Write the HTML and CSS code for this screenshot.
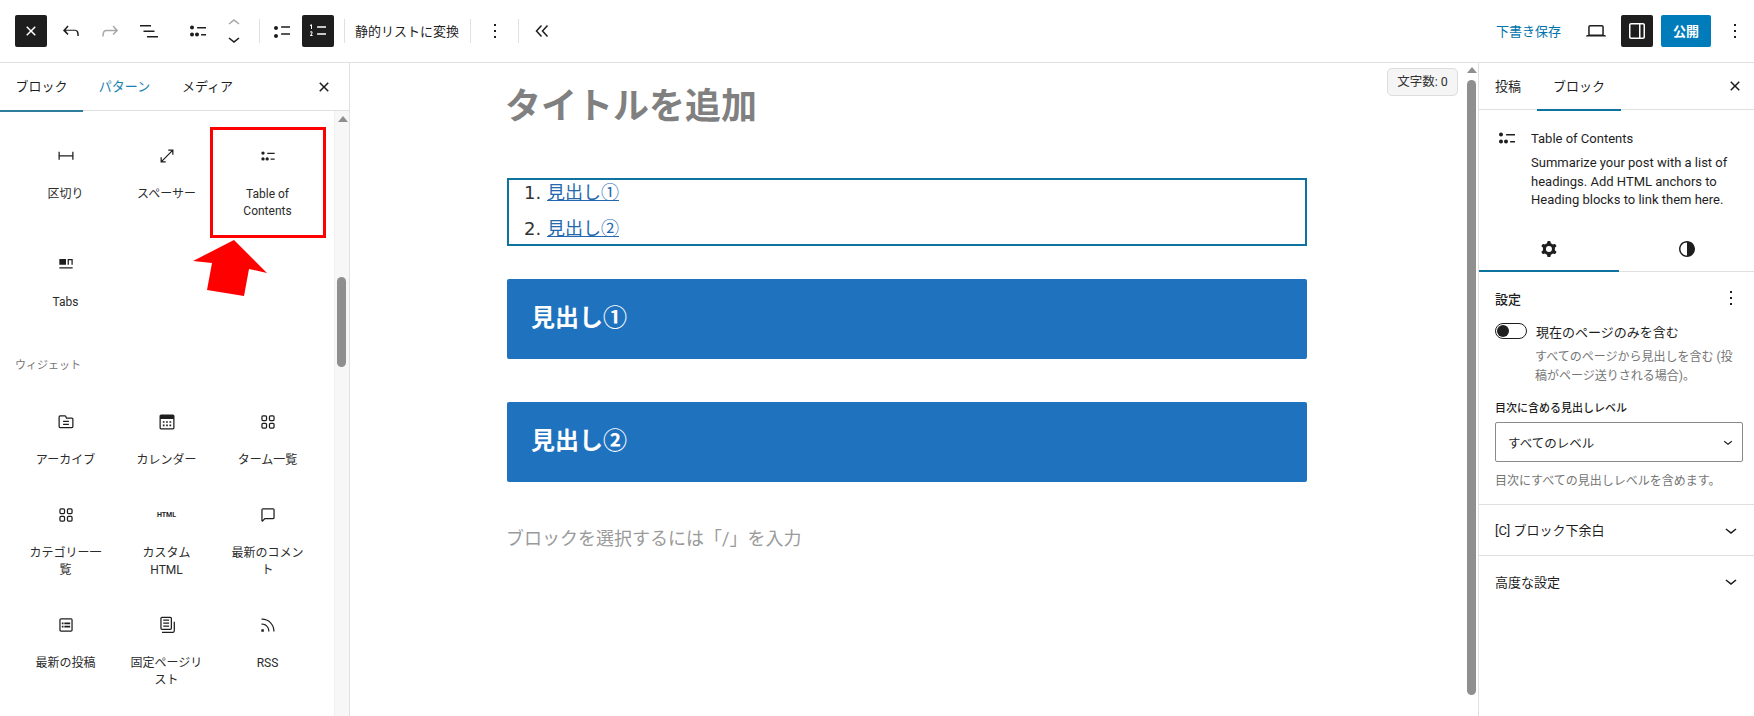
FILE: index.html
```html
<!DOCTYPE html>
<html lang="ja">
<head>
<meta charset="utf-8">
<title>Editor</title>
<link rel="stylesheet" href="styles.css">
</head>
<body>
<svg class="defs" width="0" height="0" aria-hidden="true">
  <symbol id="i-close" viewBox="0 0 24 24"><path d="M12 13.06l3.712 3.713 1.061-1.06L13.061 12l3.712-3.712-1.06-1.06L12 10.938 8.288 7.227l-1.061 1.06L10.939 12l-3.712 3.712 1.06 1.061L12 13.061z"/></symbol>
  <symbol id="i-more" viewBox="0 0 24 24"><path d="M13 19h-2v-2h2v2zm0-6h-2v-2h2v2zm0-6h-2V5h2v2z"/></symbol>
  <symbol id="i-toc" viewBox="0 0 24 24"><path d="M20 9.484h-8.889v-1.5H20v1.5Zm0 7h-4.889v-1.5H20v1.5Zm-14 .032a1 1 0 1 0 0-2 1 1 0 0 0 0 2Zm0 1a2 2 0 1 0 0-4 2 2 0 0 0 0 4Z"/><path d="M13 15.516a2 2 0 1 1-4 0 2 2 0 0 1 4 0ZM8 8.484a2 2 0 1 1-4 0 2 2 0 0 1 4 0Z"/></symbol>
  <symbol id="i-down" viewBox="0 0 24 24"><path d="M17.5 11.6L12 16l-5.5-4.4.9-1.2L12 14l4.5-3.6 1 1.2z"/></symbol>
  <symbol id="i-cat" viewBox="0 0 24 24"><path fill-rule="evenodd" d="M6 5.5h3a.5.5 0 0 1 .5.5v3a.5.5 0 0 1-.5.5H6a.5.5 0 0 1-.5-.5V6a.5.5 0 0 1 .5-.5ZM4 6a2 2 0 0 1 2-2h3a2 2 0 0 1 2 2v3a2 2 0 0 1-2 2H6a2 2 0 0 1-2-2V6Zm11-.5h3a.5.5 0 0 1 .5.5v3a.5.5 0 0 1-.5.5h-3a.5.5 0 0 1-.5-.5V6a.5.5 0 0 1 .5-.5ZM13 6a2 2 0 0 1 2-2h3a2 2 0 0 1 2 2v3a2 2 0 0 1-2 2h-3a2 2 0 0 1-2-2V6Zm5 8.5h-3a.5.5 0 0 0-.5.5v3a.5.5 0 0 0 .5.5h3a.5.5 0 0 0 .5-.5v-3a.5.5 0 0 0-.5-.5ZM15 13a2 2 0 0 0-2 2v3a2 2 0 0 0 2 2h3a2 2 0 0 0 2-2v-3a2 2 0 0 0-2-2h-3Zm-9 1.5h3a.5.5 0 0 1 .5.5v3a.5.5 0 0 1-.5.5H6a.5.5 0 0 1-.5-.5v-3a.5.5 0 0 1 .5-.5ZM4 15a2 2 0 0 1 2-2h3a2 2 0 0 1 2 2v3a2 2 0 0 1-2 2H6a2 2 0 0 1-2-2v-3Z"/></symbol>
</svg>

<div class="app">
  <header class="topbar">
    <div class="tools">
      <button class="tool tool-dark"><svg class="ic ic-x"><use href="#i-close"/></svg></button>
      <button class="tool tool-undo"><svg class="ic" viewBox="0 0 24 24"><path d="M18.3 11.7c-.6-.6-1.4-.9-2.3-.9H6.7l2.9-3.3-1.1-1-4.5 5L8.5 16l1-1-2.7-3.2H16c.5 0 .9.2 1.3.5 1 1 1 3.4 1 4.5v.3h1.5v-.2c0-1.5 0-4.3-1.5-5.7z"/></svg></button>
      <button class="tool"><svg class="ic ic-off" viewBox="0 0 24 24"><path d="M15.6 6.5l-1.1 1 2.9 3.3H8c-.9 0-1.7.3-2.3.9-1.4 1.5-1.4 4.2-1.4 5.6v.2h1.5v-.3c0-1.1 0-3.5 1-4.5.3-.3.7-.5 1.3-.5h9.2L14.5 15l1.1 1.1 4.6-4.6-4.6-5z"/></svg></button>
      <button class="tool"><svg class="ic" viewBox="0 0 24 24"><path d="M3 6h11v1.5H3V6zm3.5 5.5h11V13h-11v-1.500zM21 17H10v1.5h11V17z"/></svg></button>
      <button class="tool tool-toc"><svg class="ic"><use href="#i-toc"/></svg></button>
      <div class="tool mover">
        <svg class="ic ic-off" viewBox="0 0 24 24"><path d="M6.5 12.4L12 8l5.5 4.4-.9 1.2L12 10l-4.500 3.6-1-1.2z"/></svg>
        <svg class="ic"><use href="#i-down"/></svg>
      </div>
      <span class="sep sep-a"></span>
      <button class="tool"><svg class="ic" viewBox="0 0 24 24"><path d="M11.1 15.8H20v-1.5h-8.9v1.5zm0-8.6v1.5H20V7.2h-8.9zM6 11c1.1 0 2-.9 2-2s-.9-2-2-2-2 .9-2 2 .9 2 2 2zm0 8c1.1 0 2-.9 2-2s-.9-2-2-2-2 .9-2 2 .9 2 2 2z"/></svg></button>
      <button class="tool tool-dark tool-num"><svg class="ic ic-w" viewBox="0 0 24 24"><path d="M11.1 15.8H20v-1.5h-8.9v1.5zm0-8.6v1.5H20V7.2h-8.9zM5 6.7V10h1V5.3L3.8 6l.4 1 .8-.3zm-.4 5.7c-.3.1-.5.2-.7.3l.1 1.1c.2-.2.5-.4.8-.5.3-.1.6 0 .7.1.2.3 0 .8-.2 1.1-.5.8-.9 1.6-1.4 2.5h2.7v-1h-1c.3-.6.8-1.4.9-2.1.1-.3 0-.8-.2-1.1-.5-.6-1.3-.5-1.7-.4z"/></svg></button>
      <span class="sep sep-b"></span>
      <span class="tool-text">静的リストに変換</span>
      <span class="sep sep-c"></span>
      <button class="tool"><svg class="ic"><use href="#i-more"/></svg></button>
      <span class="sep sep-d"></span>
      <button class="tool"><svg class="ic" viewBox="0 0 24 24"><path class="ln" d="M11.500 6.500 6.500 12l5 5.500M17.500 6.500l-5 5.500 5 5.500"/></svg></button>
    </div>
    <div class="actions">
      <span class="save">下書き保存</span>
      <button class="tool tool-view"><svg class="ic" viewBox="0 0 24 24"><path d="M20.5 16h-.7V8c0-1.1-.9-2-2-2H6.200c-1.100 0-2 .9-2 2v8h-.7c-.8 0-1.500.7-1.500 1.500h20c0-.8-.7-1.500-1.500-1.500zM5.700 8c0-.3.2-.5.5-.5h11.600c.3 0 .5.2.5.5v7.600H5.700V8z"/></svg></button>
      <button class="tool tool-dark"><svg class="ic ic-w" viewBox="0 0 24 24"><path d="M18 4H6c-1.100 0-2 .9-2 2v12c0 1.100.9 2 2 2h12c1.100 0 2-.9 2-2V6c0-1.100-.9-2-2-2zm-4 14.500H6c-.3 0-.5-.2-.5-.5V6c0-.3.2-.5.5-.5h8v13zm4.500-.5c0 .3-.2.5-.5.5h-2.500v-13H18c.3 0 .5.2.5.5v12z"/></svg></button>
      <button class="publish">公開</button>
      <button class="tool tool-more2"><svg class="ic"><use href="#i-more"/></svg></button>
    </div>
  </header>

  <main class="main">
    <aside class="inserter">
      <div class="ins-tabs">
        <span class="tab tab-on">ブロック</span>
        <span class="tab tab-blue">パターン</span>
        <span class="tab">メディア</span>
        <svg class="ic ins-close"><use href="#i-close"/></svg>
      </div>
      <div class="ins-body">
        <div class="ins-list">
          <div class="grid grid-first">
            <div class="item"><svg class="ic" viewBox="0 0 24 24"><path d="M4.500 12.500v4H3V7h1.500v3.987h15V7H21v9.500h-1.500v-4h-15Z"/></svg><span class="label">区切り</span></div>
            <div class="item"><svg class="ic" viewBox="0 0 24 24"><path class="ln" d="M13.500 5h5.500v5.500M19 5 5 19M5 13.500V19h5.500"/></svg><span class="label">スペーサー</span></div>
            <div class="item"><svg class="ic"><use href="#i-toc"/></svg><span class="label">Table of Contents</span></div>
            <div class="item"><svg class="ic" viewBox="0 0 24 24"><path d="M4 6h8v7H4zM4 16h16v1.500H4z"/><path class="ln" d="M14.700 13V6.700h4.600V13"/></svg><span class="label">Tabs</span></div>
          </div>
          <h3 class="group-title">ウィジェット</h3>
          <div class="grid">
            <div class="item"><svg class="ic" viewBox="0 0 24 24"><path fill-rule="evenodd" d="M13 6.500h6a2 2 0 0 1 2 2v9a2 2 0 0 1-2 2H5a2 2 0 0 1-2-2V6a2 2 0 0 1 2-2h5.800a2 2 0 0 1 1.700 1l.5 1.500ZM12 8 11.200 6a.5.5 0 0 0-.4-.5H5a.5.5 0 0 0-.5.5v11.500a.5.5 0 0 0 .5.5h14a.5.5 0 0 0 .5-.5v-9A.5.5 0 0 0 19 8h-7Z"/><path d="M8.500 10.500H15.500V12H8.500zM8.500 14H15.500V15.500H8.500z"/></svg><span class="label">アーカイブ</span></div>
            <div class="item"><svg class="ic" viewBox="0 0 24 24"><path d="M19 3H5c-1.105 0-2 .895-2 2v14c0 1.105.895 2 2 2h14c1.105 0 2-.895 2-2V5c0-1.105-.895-2-2-2zM4.500 8.500h15V19c0 .276-.224.5-.5.5H5c-.276 0-.5-.224-.5-.5V8.500zM7 11h2v2H7zm4 0h2v2h-2zm4 0h2v2h-2zM7 15h2v2H7zm4 0h2v2h-2zm4 0h2v2h-2z"/></svg><span class="label">カレンダー</span></div>
            <div class="item"><svg class="ic"><use href="#i-cat"/></svg><span class="label">ターム一覧</span></div>
            <div class="item"><svg class="ic"><use href="#i-cat"/></svg><span class="label">カテゴリー一覧</span></div>
            <div class="item"><span class="ic-html">HTML</span><span class="label">カスタム HTML</span></div>
            <div class="item"><svg class="ic" viewBox="0 0 24 24"><path d="M18 4H6c-1.100 0-2 .9-2 2v12.900c0 .6.5 1.100 1.100 1.100.3 0 .5-.1.8-.3L8.500 17H18c1.100 0 2-.9 2-2V6c0-1.100-.9-2-2-2zm.5 11c0 .3-.2.5-.5.5H7.900l-2.400 2.400V6c0-.3.2-.5.5-.5h12c.3 0 .5.2.5.5v9z"/></svg><span class="label">最新のコメント</span></div>
            <div class="item"><svg class="ic" viewBox="0 0 24 24"><path d="M18 4H6c-1.100 0-2 .9-2 2v12c0 1.100.9 2 2 2h12c1.100 0 2-.9 2-2V6c0-1.100-.9-2-2-2zm.5 14c0 .3-.2.5-.5.5H6c-.3 0-.5-.2-.5-.5V6c0-.3.2-.5.5-.5h12c.3 0 .5.2.5.5v12zM7 11h2V9H7v2zm0 4h2v-2H7v2zm3-4h7V9h-7v2zm0 4h7v-2h-7v2z"/></svg><span class="label">最新の投稿</span></div>
            <div class="item"><svg class="ic" viewBox="0 0 24 24"><path d="M14.500 5.500h-7V7h7V5.500ZM7.500 9h7v1.500h-7V9Zm7 3.500h-7V14h7v-1.500Z"/><path d="M16 2H6a2 2 0 0 0-2 2v12a2 2 0 0 0 2 2h10a2 2 0 0 0 2-2V4a2 2 0 0 0-2-2ZM6 3.500h10a.5.5 0 0 1 .5.5v12a.5.5 0 0 1-.5.5H6a.5.5 0 0 1-.5-.5V4a.5.5 0 0 1 .5-.5Z"/><path d="M20 8v11c0 .69-.31 1-.999 1H6v1.500h13.001c1.520 0 2.499-.982 2.499-2.500V8H20Z"/></svg><span class="label">固定ページリスト</span></div>
            <div class="item"><svg class="ic" viewBox="0 0 24 24"><path d="M5 10.200h-.8v1.500H5c1.900 0 3.800.8 5.100 2.100 1.400 1.400 2.100 3.200 2.100 5.100v.8h1.500V19c0-2.300-.9-4.500-2.600-6.200-1.600-1.600-3.800-2.600-6.100-2.600zm10.400-1.600C12.600 5.800 8.900 4.200 5 4.200h-.8v1.500H5c3.500 0 6.900 1.400 9.400 3.900s3.900 5.800 3.900 9.400v.8h1.500V19c0-3.900-1.600-7.600-4.400-10.400zM4 20h3v-3H4v3z"/></svg><span class="label">RSS</span></div>
          </div>
        </div>
        <div class="sbar sbar-left"><i class="sbar-up"></i><i class="sbar-thumb"></i></div>
        <div class="redbox"></div>
        <svg class="redarrow" viewBox="0 0 80 60"><polygon points="41,0 0,21 19,23 14,50 51,56 56,29 74,33"/></svg>
      </div>
    </aside>

    <section class="canvas">
      <div class="canvas-inner">
        <div class="doc">
          <h1 class="title">タイトルを追加</h1>
          <div class="toc">
            <ol class="toc-list">
              <li><a class="toc-link">見出し①</a></li>
              <li><a class="toc-link">見出し②</a></li>
            </ol>
          </div>
          <h2 class="heading">見出し①</h2>
          <h2 class="heading heading-2">見出し②</h2>
          <p class="placeholder">ブロックを選択するには「/」を入力</p>
        </div>
      </div>
      <div class="sbar sbar-right"><i class="sbar-up"></i><i class="sbar-thumb"></i></div>
      <div class="count">文字数: 0</div>
    </section>

    <aside class="inspector">
      <div class="insp-tabs">
        <span class="itab">投稿</span>
        <span class="itab itab-on">ブロック</span>
        <svg class="ic insp-close"><use href="#i-close"/></svg>
      </div>
      <div class="card">
        <svg class="ic card-ic"><use href="#i-toc"/></svg>
        <div class="card-text">
          <div class="card-title">Table of Contents</div>
          <p class="card-desc">Summarize your post with a list of headings. Add HTML anchors to Heading blocks to link them here.</p>
        </div>
      </div>
      <div class="stabs">
        <span class="stab stab-on"><svg class="ic" viewBox="0 0 24 24"><path fill-rule="evenodd" d="M10.289 4.836A1 1 0 0 1 11.275 4h1.306a1 1 0 0 1 .987.836l.244 1.466c.787.26 1.503.679 2.108 1.218l1.393-.522a1 1 0 0 1 1.216.437l.653 1.13a1 1 0 0 1-.23 1.273l-1.148.944a6.025 6.025 0 0 1 0 2.435l1.149.946a1 1 0 0 1 .23 1.272l-.653 1.13a1 1 0 0 1-1.216.437l-1.394-.522c-.605.54-1.32.958-2.108 1.218l-.244 1.466a1 1 0 0 1-.987.836h-1.306a1 1 0 0 1-.986-.836l-.244-1.466a5.995 5.995 0 0 1-2.108-1.218l-1.394.522a1 1 0 0 1-1.217-.436l-.653-1.131a1 1 0 0 1 .23-1.272l1.149-.946a6.026 6.026 0 0 1 0-2.435l-1.148-.944a1 1 0 0 1-.23-1.272l.653-1.131a1 1 0 0 1 1.217-.437l1.393.522a5.994 5.994 0 0 1 2.108-1.218l.244-1.466ZM14.929 12a3 3 0 1 1-6 0 3 3 0 0 1 6 0Z"/></svg></span>
        <span class="stab"><svg class="ic" viewBox="0 0 24 24"><path d="M12 4c-4.400 0-8 3.600-8 8s3.600 8 8 8 8-3.600 8-8-3.600-8-8-8zm0 14.500c-3.600 0-6.500-2.900-6.500-6.500S8.400 5.500 12 5.500v13z"/></svg></span>
      </div>
      <div class="settings">
        <div class="set-head"><span class="set-title">設定</span><svg class="ic"><use href="#i-more"/></svg></div>
        <div class="toggle-row"><span class="toggle"><i class="knob"></i></span><span class="toggle-label">現在のページのみを含む</span></div>
        <p class="help help-toggle">すべてのページから見出しを含む (投稿がページ送りされる場合)。</p>
        <div class="field-label">目次に含める見出しレベル</div>
        <div class="select"><span>すべてのレベル</span><svg class="ic sel-ic"><use href="#i-down"/></svg></div>
        <p class="help help-select">目次にすべての見出しレベルを含めます。</p>
      </div>
      <div class="acc"><span>[C] ブロック下余白</span><svg class="ic"><use href="#i-down"/></svg></div>
      <div class="acc"><span>高度な設定</span><svg class="ic"><use href="#i-down"/></svg></div>
    </aside>
  </main>
</div>
</body>
</html>
```
FILE: styles.css
```css
* { box-sizing: border-box; }
html, body { margin: 0; height: 100%; overflow: hidden; background: #fff; }
body { font-family: Roboto, "Noto Sans CJK JP", sans-serif; font-size: 13px; color: #1e1e1e; }
h1, h2, h3, p { margin: 0; }
button { border: 0; background: none; padding: 0; font: inherit; color: inherit; }
.defs { position: absolute; }

.app { display: flex; flex-direction: column; width: 1754px; height: 716px; }
.ic { display: block; width: 24px; height: 24px; fill: #1e1e1e; flex: none; }
.ic-w, .ic-x { fill: #fff; }
.ic-off { fill: #a8a8a8; }
.ln { fill: none; stroke: #1e1e1e; stroke-width: 1.5; }

/* top bar */
.topbar { display: flex; justify-content: space-between; align-items: center; height: 63px; padding: 0 3px 1px 15px; border-bottom: 1px solid #e0e0e0; flex: none; }
.tools, .actions { display: flex; align-items: center; }
.tool { display: flex; align-items: center; justify-content: center; width: 32px; height: 32px; border-radius: 2px; flex: none; }
.tools .tool + .tool { margin-left: 7px; }
.tool-dark { background: #1e1e1e; }
.tools .tool + .tool.tool-undo { margin-left: 8px; }
.tools .tool + .tool.tool-toc { margin-left: 17px; }
.tools .tool + .tool.mover { margin-left: 4px; flex-direction: column; }
.mover .ic + .ic { margin-top: -8px; }
.tools .tool + .tool.tool-num { margin-left: 4px; }
.sep { width: 1px; height: 24px; background: #e0e0e0; flex: none; }
.sep-a { margin: 0 6px 0 9px; }
.sep-b { margin: 0 10px; }
.sep-c { margin: 0 8px 0 12px; }
.sep-d { margin: 0 7px; }
.tool-text { width: 103px; font-size: 13px; white-space: nowrap; }
.save { color: #0073aa; width: 64px; white-space: nowrap; }
.actions .tool-view { margin-left: 20px; }
.actions .tool-dark { margin-left: 9px; }
.publish { width: 50px; height: 32px; margin-left: 8px; background: #007cba; color: #fff; border-radius: 2px; font-weight: 700; font-size: 13px; }
.tool-more2 { margin-left: 8px; }

/* main */
.main { display: flex; flex: 1; min-height: 0; }

/* inserter */
.inserter { display: flex; flex-direction: column; width: 350px; border-right: 1px solid #e0e0e0; flex: none; }
.ins-tabs { display: flex; align-items: center; height: 48px; border-bottom: 1px solid #e0e0e0; position: relative; flex: none; }
.tab { width: 83px; height: 48px; line-height: 48px; text-align: center; position: relative; font-size: 13px; }
.tab-on::after { content: ""; position: absolute; left: 0; right: 0; bottom: -1px; height: 2px; background: #2f7d9c; }
.tab-blue { color: #1c83b0; }
.ins-close { margin-left: auto; margin-right: 13px; }
.ins-body { flex: 1; display: flex; position: relative; min-height: 0; }
.ins-list { flex: 1; overflow: hidden; padding: 33px 0 0 15px; }
.grid { display: grid; grid-template-columns: repeat(3, 101px); row-gap: 34px; align-items: start; }
.grid-first { row-gap: 32px; }
.item { display: flex; flex-direction: column; align-items: center; padding: 0 12px; }
.item .ic { width: 20px; height: 20px; margin: 2px 0; }
.label { margin-top: 18px; font-size: 12px; line-height: 17px; text-align: center; color: #2b2b2b; }
.ic-html { display: block; height: 24px; font-size: 7px; font-weight: 700; line-height: 24px; text-align: center; }
.group-title { margin: 47px 0 36px 0; font-size: 11px; font-weight: 400; line-height: 16px; color: #757575; }
.sbar { position: relative; flex: none; }
.sbar-left { width: 15px; background: #f7f7f7; border-left: 1px solid #f0f0f0; }
.sbar-right { width: 13px; }
.sbar-up { position: absolute; width: 0; height: 0; border: 5px solid transparent; border-top: 0; border-bottom: 6px solid #8f8f8f; }
.sbar-thumb { position: absolute; background: #8f8f8f; border-radius: 5px; }
.sbar-left .sbar-up { left: 3px; top: 5px; }
.sbar-left .sbar-thumb { left: 2px; width: 9px; top: 166px; height: 90px; }
.sbar-right .sbar-up { left: 2px; top: 4px; }
.sbar-right .sbar-thumb { left: 2px; width: 9px; top: 17px; height: 615px; }
.redbox { position: absolute; left: 210px; top: 16px; width: 116px; height: 111px; border: 3px solid #f00; }
.redarrow { position: absolute; left: 193px; top: 129px; width: 80px; height: 60px; fill: #f00; }

/* canvas */
.canvas { flex: 1; display: flex; position: relative; min-width: 0; }
.canvas-inner { flex: 1; overflow: hidden; padding-left: 157px; }
.doc { width: 800px; padding-top: 19px; }
.title { margin-left: -2px; font-size: 36px; line-height: 50px; font-weight: 700; color: #808080; }
.toc { height: 68px; margin-top: 46px; border: 2px solid #0f73a0; }
.toc-list { margin: -5px 0 0; padding-left: 38px; font-size: 18px; line-height: 36px; color: #333; }
.toc-list li::marker { font-family: "DejaVu Sans", sans-serif; font-size: 18px; }
.toc-link { color: #2468b0; text-decoration: underline; }
.heading { height: 80px; margin-top: 33px; padding-left: 24px; background: #1f72be; border-radius: 2px; color: #fff; font-size: 24px; font-weight: 700; line-height: 78px; }
.heading-2 { margin-top: 43px; }
.placeholder { margin-top: 43px; margin-left: -1px; font-size: 18px; line-height: 27px; color: #9a9a9a; }
.count { position: absolute; top: 5px; right: 20px; width: 71px; height: 28px; background: #f5f5f5; border: 1px solid #ddd; border-radius: 5px; text-align: center; line-height: 26px; font-size: 12.5px; color: #333; }

/* inspector */
.inspector { width: 276px; border-left: 1px solid #e0e0e0; flex: none; }
.insp-tabs { display: flex; align-items: center; height: 47px; border-bottom: 1px solid #e0e0e0; }
.itab { width: 58px; height: 47px; line-height: 47px; text-align: center; position: relative; }
.itab-on { width: 84px; }
.itab-on::after { content: ""; position: absolute; left: 0; right: 0; bottom: -1px; height: 2px; background: #0f73a0; }
.insp-close { margin-left: auto; margin-right: 7px; }
.card { display: flex; padding: 17px 11px 0 16px; height: 114px; }
.card-ic { margin-right: 12px; margin-top: -1px; }
.card-title { line-height: 18px; margin-top: 3px; }
.card-desc { margin-top: 6px; line-height: 18.5px; }
.stabs { display: flex; height: 48px; border-bottom: 1px solid #e0e0e0; }
.stab { flex: 1; display: flex; justify-content: center; padding-top: 13px; position: relative; }
.stab-on { flex: 0 0 140px; }
.stab-on::after { content: ""; position: absolute; left: 0; right: 0; bottom: -1px; height: 2px; background: #0f73a0; }
.settings { padding: 16px 11px 13px 16px; border-bottom: 1px solid #e0e0e0; }
.set-head { display: flex; justify-content: space-between; align-items: center; height: 20px; }
.set-title { font-weight: 500; font-size: 13px; }
.toggle-row { display: flex; align-items: center; height: 20px; margin-top: 13px; }
.toggle { display: block; width: 32px; height: 16px; border: 1px solid #1e1e1e; border-radius: 8px; padding: 1px; margin-right: 9px; }
.knob { display: block; width: 12px; height: 12px; border-radius: 50%; background: #1e1e1e; }
.help { font-size: 12px; line-height: 18.5px; color: #757575; }
.help-toggle { margin: 7px 0 0 40px; }
.field-label { margin-top: 16px; font-size: 11px; line-height: 16px; font-weight: 500; }
.select { display: flex; justify-content: space-between; align-items: center; height: 40px; margin-top: 5px; padding: 0 5px 0 12px; border: 1px solid #8a8a8a; border-radius: 2px; font-size: 12.5px; }
.sel-ic { width: 18px; height: 18px; }
.help-select { margin-top: 10px; }
.acc { display: flex; justify-content: space-between; align-items: center; height: 51px; padding: 0 11px 0 16px; border-bottom: 1px solid #e0e0e0; font-weight: 400; }
.acc:last-child { border-bottom: 0; }
```
